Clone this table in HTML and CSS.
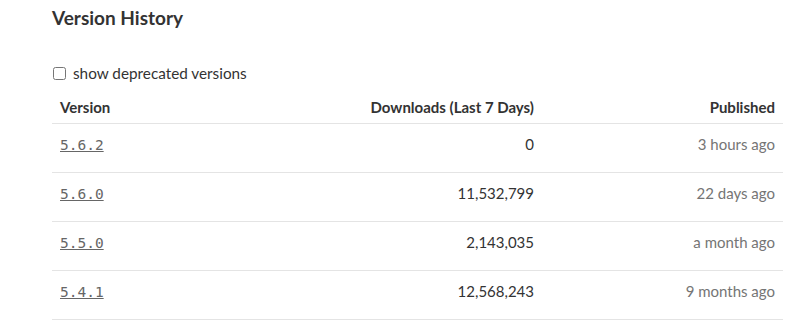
FILE: index.html
```html
<!DOCTYPE html>
<html>
<head>
<meta charset="utf-8">
<link rel="stylesheet" href="styles.css">
</head>
<body>
<div class="page">
  <h3 class="title">Version History</h3>
  <label class="toggle"><input type="checkbox" class="check"><span>show deprecated versions</span></label>
  <table class="versions">
    <thead>
      <tr>
        <th class="c-ver">Version</th>
        <th class="c-dl">Downloads (Last 7 Days)</th>
        <th class="c-pub">Published</th>
      </tr>
    </thead>
    <tbody>
      <tr><td class="c-ver"><a class="ver" href="#">5.6.2</a></td><td class="c-dl">0</td><td class="c-pub">3 hours ago</td></tr>
      <tr><td class="c-ver"><a class="ver" href="#">5.6.0</a></td><td class="c-dl">11,532,799</td><td class="c-pub">22 days ago</td></tr>
      <tr><td class="c-ver"><a class="ver" href="#">5.5.0</a></td><td class="c-dl">2,143,035</td><td class="c-pub">a month ago</td></tr>
      <tr><td class="c-ver"><a class="ver" href="#">5.4.1</a></td><td class="c-dl">12,568,243</td><td class="c-pub">9 months ago</td></tr>
    </tbody>
  </table>
</div>
</body>
</html>
```
FILE: styles.css
```css
html, body { margin: 0; padding: 0; background: #fff; }
body { font-family: "Lato", "Liberation Sans", sans-serif; color: #333; }
.page { padding: 4px 0 0 52px; width: 731px; }
.title { margin: 0; font-size: 19px; line-height: 28px; font-weight: 700; color: #333; }
.toggle { display: flex; align-items: center; margin-top: 31px; height: 20px; font-size: 15.3px; color: #333; }
.check { margin: 0 7px 0 1px; width: 13px; height: 13px; }
.versions { width: 731px; border-collapse: collapse; margin-top: 7px; table-layout: fixed; }
.versions th { font-size: 15px; font-weight: 700; color: #333; height: 33px; padding: 0 8px; border-bottom: 1px solid #e4e4e4; vertical-align: middle; }
.versions td { font-size: 15px; line-height: 20px; height: 38px; padding: 10px 8px 0; border-bottom: 1px solid #e4e4e4; vertical-align: top; }
.c-ver { width: 184px; text-align: left; }
.c-dl { width: 274px; text-align: right; color: #333; }
.c-pub { text-align: right; color: #757575; }
th.c-dl, th.c-pub { color: #333; }
.ver { font-family: "DejaVu Sans Mono", monospace; font-size: 14.5px; color: #666; text-decoration: underline; }
```
